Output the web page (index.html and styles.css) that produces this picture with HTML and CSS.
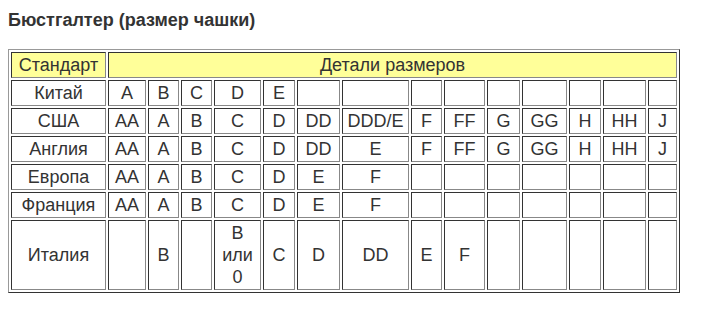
FILE: index.html
```html
<!DOCTYPE html>
<html lang="ru">

<head>
    <meta charset="UTF-8">
    <title>Бюстгалтер (размер чашки)</title>
    <link rel="stylesheet" href="styles.css">
</head>

<body>

    <div class="size-title">Бюстгалтер (размер чашки)</div>

    <table class="size-table">
        <colgroup>
            <col class="w-std">
            <col class="w-aa">
            <col class="w-a">
            <col class="w-b">
            <col class="w-c">
            <col class="w-d">
            <col class="w-dd">
            <col class="w-ddd">
            <col class="w-f">
            <col class="w-ff">
            <col class="w-g">
            <col class="w-gg">
            <col class="w-h">
            <col class="w-hh">
            <col class="w-j">
        </colgroup>
        <tr class="head">
            <td>Стандарт</td>
            <td colspan="14">Детали размеров</td>
        </tr>
        <tr>
            <td>Китай</td>
            <td>A</td><td>B</td><td>C</td><td>D</td><td>E</td>
            <td></td><td></td><td></td><td></td><td></td><td></td><td></td><td></td><td></td>
        </tr>
        <tr>
            <td>США</td>
            <td>AA</td><td>A</td><td>B</td><td>C</td><td>D</td><td>DD</td><td>DDD/E</td>
            <td>F</td><td>FF</td><td>G</td><td>GG</td><td>H</td><td>HH</td><td>J</td>
        </tr>
        <tr>
            <td>Англия</td>
            <td>AA</td><td>A</td><td>B</td><td>C</td><td>D</td><td>DD</td><td>E</td>
            <td>F</td><td>FF</td><td>G</td><td>GG</td><td>H</td><td>HH</td><td>J</td>
        </tr>
        <tr>
            <td>Европа</td>
            <td>AA</td><td>A</td><td>B</td><td>C</td><td>D</td><td>E</td><td>F</td>
            <td></td><td></td><td></td><td></td><td></td><td></td><td></td>
        </tr>
        <tr>
            <td>Франция</td>
            <td>AA</td><td>A</td><td>B</td><td>C</td><td>D</td><td>E</td><td>F</td>
            <td></td><td></td><td></td><td></td><td></td><td></td><td></td>
        </tr>
        <tr>
            <td>Италия</td>
            <td></td><td>B</td><td></td><td>B<br>или<br>0</td><td>C</td><td>D</td><td>DD</td>
            <td>E</td><td>F</td><td></td><td></td><td></td><td></td><td></td>
        </tr>
    </table>

</body>

</html>
```

FILE: styles.css
```css
body {
    margin: 8px;
    background: #fff;
    color: #333;
    font-family: "Liberation Sans", Arial, sans-serif;
}

.size-title {
    font-size: 18px;
    font-weight: bold;
    line-height: 21px;
    margin: 2px 0 18px;
}

/* старая таблица с border=1: рамка outset, ячейки inset */
.size-table {
    table-layout: fixed;
    width: 672px;
    border-collapse: separate;
    border-spacing: 2px;
    border: 1px solid;
    border-color: #999 #333 #333 #999;
    font-size: 18px;
    line-height: 22px;
}

.size-table td {
    box-sizing: border-box;
    padding: 1px;
    text-align: center;
    vertical-align: middle;
    border: 1px solid;
    border-color: #333 #888 #888 #333;
}

.size-table .head td {
    background: #ffff99;
}

.w-std { width: 95px; }
.w-aa  { width: 38px; }
.w-a   { width: 31px; }
.w-b   { width: 31px; }
.w-c   { width: 47px; }
.w-d   { width: 32px; }
.w-dd  { width: 43px; }
.w-ddd { width: 67px; }
.w-f   { width: 31px; }
.w-ff  { width: 41px; }
.w-g   { width: 33px; }
.w-gg  { width: 45px; }
.w-h   { width: 32px; }
.w-hh  { width: 43px; }
.w-j   { width: 29px; }
```
